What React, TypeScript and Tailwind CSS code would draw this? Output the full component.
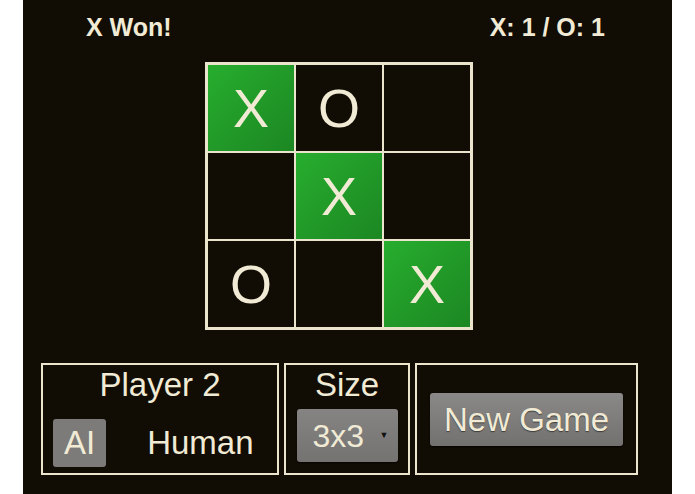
import React from 'react';

const cells: { v: string; win: boolean }[] = [
    { v: 'X', win: true }, { v: 'O', win: false }, { v: '', win: false },
    { v: '', win: false }, { v: 'X', win: true }, { v: '', win: false },
    { v: 'O', win: false }, { v: '', win: false }, { v: 'X', win: true },
];

export default function App() {
    return (
        <div className="w-[695px] h-[494px] bg-white flex" style={{ fontFamily: '"Liberation Sans", Arial, sans-serif' }}>
            <div className="ml-[23px] w-[649px] h-full bg-[#110c04] text-[#f1ebd5] flex flex-col">
                {/* Status bar */}
                <div className="h-[56px] flex items-center justify-between pl-[63px] pr-[67px] text-[25px] font-bold">
                    <span>X Won!</span>
                    <span>X: 1 / O: 1</span>
                </div>

                {/* Board */}
                <div className="mt-[6px] ml-[182px] w-[268px] grid grid-cols-[repeat(3,86px)] gap-[2px] p-[3px] bg-[#ece5cd]">
                    {cells.map((c, i) => (
                        <div
                            key={i}
                            className={`h-[86px] flex items-center justify-center text-[54px] leading-none ${c.win ? 'bg-gradient-to-br from-[#27ad2e] to-[#1c8723]' : 'bg-[#110c04]'}`}
                        >
                            {c.v}
                        </div>
                    ))}
                </div>

                {/* Controls */}
                <div className="mt-[33px] ml-[18px] flex gap-[5px]">
                    <div className="w-[238px] h-[112px] border-2 border-[#ece5cd] flex flex-col items-center pt-[2px]">
                        <div className="text-[33px] leading-[36px]">Player 2</div>
                        <div className="mt-[16px] w-full flex items-center pl-[10px] gap-[30px]">
                            <button className="h-[48px] px-[11px] bg-[#7c7b79] rounded-[3px] text-[33px] leading-[36px] text-[#f1ebd5]">AI</button>
                            <button className="h-[48px] px-[11px] text-[33px] leading-[36px] text-[#f1ebd5]">Human</button>
                        </div>
                    </div>
                    <div className="w-[126px] h-[112px] border-2 border-[#ece5cd] flex flex-col items-center pt-[2px]">
                        <div className="text-[33px] leading-[36px]">Size</div>
                        <div className="mt-[6px] w-[101px] h-[53px] bg-gradient-to-b from-[#858483] to-[#747371] rounded-[3px] shadow-[0_1px_2px_rgba(0,0,0,0.6)] flex items-center pl-[16px] pr-[9px]">
                            <span className="text-[32px] leading-none">3x3</span>
                            <span className="ml-auto text-[9px] text-[#111]">▼</span>
                        </div>
                    </div>
                    <div className="w-[223px] h-[112px] border-2 border-[#ece5cd] flex items-center justify-center">
                        <button className="w-[193px] h-[53px] bg-gradient-to-b from-[#8a8988] to-[#727170] rounded-[3px] shadow-[0_1px_2px_rgba(0,0,0,0.6)] text-[33px] leading-none text-[#f1ebd5] [text-shadow:0_1px_1px_rgba(0,0,0,0.5)]">
                            New Game
                        </button>
                    </div>
                </div>
            </div>
        </div>
    );
}
